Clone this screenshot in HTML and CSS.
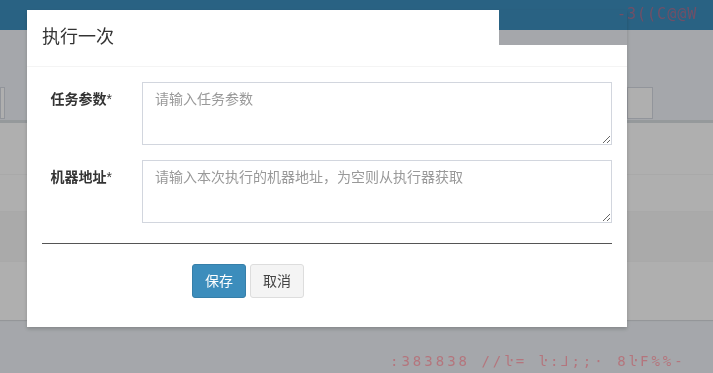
FILE: index.html
```html
<!DOCTYPE html>
<html>
<head>
  <title>执行一次</title>
  <link rel="stylesheet" href="styles.css">
</head>
<body>
  <div class="page">
    <header class="main-header"></header>
    <div class="content">
      <div class="filters">
        <div class="filter-input"></div>
        <div></div>
        <div class="filter-input"></div>
      </div>
      <div class="box">
        <div class="table-row row-head"></div>
        <div class="table-row row-a"></div>
        <div class="table-row row-b striped"></div>
        <div class="table-row row-c"></div>
      </div>
    </div>
  </div>

  <div class="modal-backdrop">
    <div class="modal">
      <div class="modal-header">
        <h4 class="modal-title">执行一次</h4>
      </div>
      <div class="modal-body">
        <form class="form-horizontal">
          <div class="form-group">
            <label class="control-label">任务参数<span class="req">*</span></label>
            <div class="col">
              <textarea class="form-control" placeholder="请输入任务参数"></textarea>
            </div>
          </div>
          <div class="form-group last">
            <label class="control-label">机器地址<span class="req">*</span></label>
            <div class="col">
              <textarea class="form-control" placeholder="请输入本次执行的机器地址，为空则从执行器获取"></textarea>
            </div>
          </div>
          <hr>
          <div class="form-actions">
            <button type="button" class="btn btn-primary">保存</button>
            <button type="button" class="btn btn-default">取消</button>
          </div>
        </form>
      </div>
    </div>
  </div>

  <div class="watermark wm-top">-3((C@@W</div>
  <div class="watermark wm-bottom">:383838 //ŀ= ŀ:⅃;;⋅ 8ŀF%%-</div>
</body>
</html>
```

FILE: styles.css
```css
body {
  margin: 0;
  height: 100vh;
  overflow: hidden;
  background-color: #ecf0f5;
  font-family: "Liberation Sans", "Noto Sans CJK SC", sans-serif;
  font-size: 14px;
  color: #333;
}

.main-header {
  height: 30px;
  background-color: #3c8dbc;
}

.content {
  padding-top: 57px;
}

.filters {
  display: grid;
  grid-template-columns: 5px 622px 26px;
  height: 32px;
  margin-bottom: 1px;
}

.filter-input {
  background-color: #fbfbfb;
  border: 1px solid #d2d6de;
}

.box {
  border-top: 3px solid #d6dbdf;
  background-color: #fbfbfb;
  box-shadow: 0 1px 1px rgba(0, 0, 0, 0.1);
}

.table-row + .table-row {
  border-top: 1px solid #f2f2f2;
}

.row-head { height: 51px; }
.row-a { height: 36px; }
.row-b { height: 49px; }
.row-c { height: 58px; }

.striped {
  background-color: #f4f4f4;
}

/* modal */
.modal-backdrop {
  position: fixed;
  top: 0;
  left: 0;
  width: 100%;
  height: 100%;
  background-color: rgba(0, 0, 0, 0.3);
}

.modal {
  width: 600px;
  margin: 10px 0 0 27px;
  background:
    linear-gradient(#fff, #fff) left top / 472px 35px no-repeat,
    linear-gradient(#fff, #fff) left 35px / 100% 100% no-repeat;
  box-shadow: 0 2px 4px rgba(0, 0, 0, 0.2);
}

.modal-header {
  padding: 15px;
  border-bottom: 1px solid #f4f4f4;
}

.modal-title {
  margin: 0;
  font-size: 18px;
  font-weight: normal;
  line-height: 25.7px;
  color: #333;
}

.modal-body {
  padding: 15px;
}

.form-group {
  display: flex;
  margin: 0 -15px 15px;
}

.form-group.last {
  margin-bottom: 0;
}

.control-label {
  width: 100px;
  box-sizing: border-box;
  padding: 7px 15px 0;
  text-align: right;
  font-weight: bold;
  line-height: 20px;
  color: #333;
}

.req {
  font-weight: normal;
}

.col {
  width: 500px;
  box-sizing: border-box;
  padding: 0 15px;
}

.form-control {
  display: block;
  width: 100%;
  height: 63px;
  box-sizing: border-box;
  margin: 0;
  padding: 6px 12px;
  border: 1px solid #d2d6de;
  border-radius: 0;
  font-family: inherit;
  font-size: 14px;
  line-height: 20px;
  color: #555;
}

.form-control::placeholder {
  color: #999;
}

hr {
  height: 0;
  margin: 20px 0;
  border: 0;
  border-top: 1px solid #555;
}

.form-actions {
  display: flex;
  padding-left: 150px;
  margin-bottom: 14px;
}

.btn {
  height: 34px;
  padding: 6px 12px;
  border: 1px solid transparent;
  border-radius: 3px;
  font-family: inherit;
  font-size: 14px;
  line-height: 20px;
}

.btn + .btn {
  margin-left: 4px;
}

.btn-primary {
  background-color: #3c8dbc;
  border-color: #367fa9;
  color: #fff;
}

.btn-default {
  background-color: #f4f4f4;
  border-color: #ddd;
  color: #444;
}

/* noisy red stamp over the capture */
.watermark {
  position: absolute;
  color: #c83a46;
  opacity: 0.45;
  font-family: "DejaVu Sans Mono", monospace;
  white-space: nowrap;
}

.wm-top {
  top: 5px;
  left: 617px;
  font-size: 15px;
  letter-spacing: 1px;
}

.wm-bottom {
  top: 351px;
  left: 390px;
  font-size: 14px;
  letter-spacing: 3px;
}
```
